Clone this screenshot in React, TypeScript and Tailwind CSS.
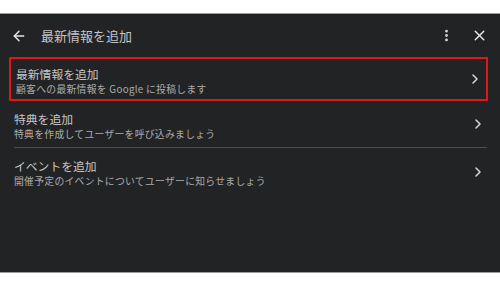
import { ArrowLeft, EllipsisVertical, X, ChevronRight } from "lucide-react";

const items = [
  { title: "最新情報を追加", sub: "顧客への最新情報を Google に投稿します" },
  { title: "特典を追加", sub: "特典を作成してユーザーを呼び込みましょう" },
  { title: "イベントを追加", sub: "開催予定のイベントについてユーザーに知らせましょう" },
];

const App = () => {
  return (
    <div
      className="w-[500px] h-[281px] bg-white pt-[13px] overflow-hidden"
      style={{ fontFamily: '"Noto Sans CJK JP", "Noto Sans", sans-serif' }}
    >
      <div className="h-[260px] bg-[#222325] border-t border-[#9a9a9a] border-b">
        <div className="flex items-center h-[43px] pl-[11px] pr-[12px]">
          <ArrowLeft size={16} strokeWidth={2.2} className="text-[#e8e8e8]" />
          <span className="ml-[14px] text-[13px] text-[#c4c4c4]">最新情報を追加</span>
          <div className="flex-1" />
          <EllipsisVertical size={15} strokeWidth={2.5} className="text-[#d8d8d8]" />
          <X size={17} strokeWidth={2} className="ml-[17px] text-[#e8e8e8]" />
        </div>
        <div className="flex flex-col">
          {items.map((item, i) => (
            <div
              key={i}
              className={
                i === 0
                  ? "ml-[9px] mr-[12px] h-[44px] border-2 border-[#e0161b] pl-[5px] pr-[3px] flex items-center"
                  : "ml-[14px] mr-[13px] h-[47px] pr-[1px] flex items-center" +
                    (i === 1 ? " border-b border-[#4a4b4d]" : "")
              }
            >
              <div className="flex-1 flex flex-col pt-[2px]">
                <span className="text-[11.8px] leading-[17px] text-[#c6c6c6]">{item.title}</span>
                <span className="text-[9.8px] leading-[14px] text-[#ababab] tracking-[0.3px]">{item.sub}</span>
              </div>
              <ChevronRight size={16} strokeWidth={2.2} className="text-[#dcdcdc]" />
            </div>
          ))}
        </div>
      </div>
    </div>
  );
};

export default App;
